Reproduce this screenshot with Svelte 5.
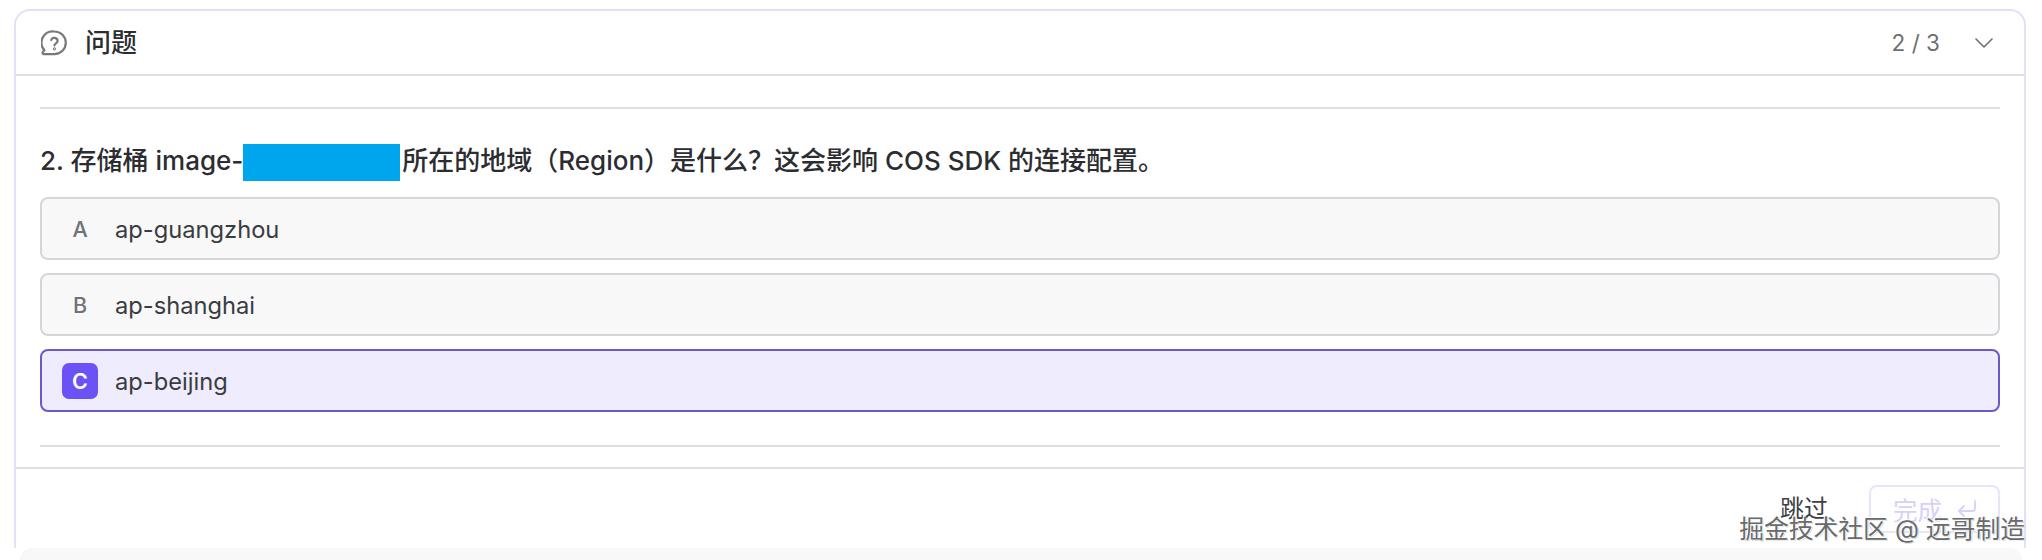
<script>
  const options = [
    { key: 'A', label: 'ap-guangzhou' },
    { key: 'B', label: 'ap-shanghai' },
    { key: 'C', label: 'ap-beijing', selected: true }
  ];
</script>

<div class="page">
  <section class="card">
    <header class="head">
      <svg class="q-icon" viewBox="0 0 26 26" fill="none" stroke="#77797d" stroke-width="2.2" stroke-linecap="round" stroke-linejoin="round">
        <path d="M13.5 1.5a11.3 11.3 0 0 1 0 22.6H3a1.4 1.4 0 0 1-1-2.4l1.4-1.5A11.3 11.3 0 0 1 13.5 1.5z" />
        <path d="M10.2 10a3.3 3.3 0 0 1 6.4 1c0 2.2-3.2 2.6-3.2 4.4" />
        <circle cx="13.4" cy="18.8" r="0.5" />
      </svg>
      <h2 class="title">问题</h2>
      <span class="count">2 / 3</span>
      <svg class="chev" viewBox="0 0 18 10" fill="none" stroke="#6b6e73" stroke-width="1.6" stroke-linecap="round" stroke-linejoin="round">
        <path d="M1 1l8 8 8-8" />
      </svg>
    </header>

    <div class="body">
      <hr class="rule" />
      <p class="question">2. 存储桶 image-<span class="mask"></span>所在的地域（Region）是什么？这会影响 COS SDK 的连接配置。</p>
      <div class="options">
        {#each options as o}
          <div class="option" class:selected={o.selected}>
            <span class="key">{o.key}</span>
            <span class="label">{o.label}</span>
          </div>
        {/each}
      </div>
      <hr class="rule second" />
    </div>

    <footer class="foot">
      <span class="skip">跳过</span>
      <div class="done">
        <span>完成</span>
        <svg class="ret" viewBox="0 0 20 18" fill="none" stroke="#d6d0fb" stroke-width="1.8" stroke-linecap="round" stroke-linejoin="round">
          <path d="M18 1v7a3 3 0 0 1-3 3H2" /><path d="M7 6l-5 5 5 5" />
        </svg>
      </div>
    </footer>
    <div class="watermark">掘金技术社区 @ 远哥制造</div>
  </section>
  <div class="strip"></div>
</div>

<style>
  :global(body) {
    margin: 0;
    background: #fff;
  }
  .page {
    width: 2042px;
    height: 560px;
    display: flex;
    flex-direction: column;
    overflow: hidden;
    font-family: Inter, "Noto Sans CJK SC", sans-serif;
    color: #2b2d31;
  }
  .card {
    position: relative;
    box-sizing: border-box;
    margin: 9px 16px 0 14px;
    height: 539px;
    border: 2px solid #e2e0f6;
    border-bottom: 0;
    border-radius: 16px 16px 0 0;
    background: #fff;
    display: flex;
    flex-direction: column;
  }
  .head {
    box-sizing: border-box;
    height: 65px;
    flex: none;
    display: flex;
    align-items: center;
    padding: 2px 31px 2px 25px;
    border-bottom: 2px solid #dcdfe3;
  }
  .q-icon {
    width: 26px;
    height: 26px;
    flex: none;
  }
  .title {
    margin: 0 0 0 18px;
    font-size: 26px;
    font-weight: 500;
    line-height: 34px;
    flex: 1;
  }
  .count {
    font-size: 22.5px;
    color: #6c6f74;
    margin-right: 35px;
  }
  .chev {
    width: 18px;
    height: 10px;
    flex: none;
  }
  .body {
    flex: none;
    padding: 31px 24px 0 24px;
  }
  .rule {
    margin: 0;
    border: 0;
    border-top: 2px solid #dcdfe2;
  }
  .question {
    margin: 35px 0 16px;
    font-size: 26px;
    font-weight: 500;
    line-height: 34px;
    display: flex;
    align-items: flex-start;
    white-space: pre;
  }
  .mask {
    display: inline-block;
    width: 157px;
    height: 37px;
    background: #00a6ed;
    margin-right: 2px;
  }
  .options {
    display: flex;
    flex-direction: column;
    gap: 13px;
  }
  .option {
    box-sizing: border-box;
    height: 63px;
    display: flex;
    align-items: center;
    padding: 0 20px;
    border: 2px solid #d3d6da;
    border-radius: 8px;
    background: #f8f8f9;
    font-size: 23.7px;
  }
  .option.selected {
    border-color: #6b59cc;
    background: #efecfd;
  }
  .key {
    width: 36px;
    height: 36px;
    flex: none;
    display: flex;
    align-items: center;
    justify-content: center;
    border-radius: 7px;
    font-size: 21.5px;
    font-weight: 500;
    color: #6f7277;
  }
  .selected .key {
    background: #6b52f6;
    color: #fff;
    font-weight: 600;
  }
  .label {
    margin-left: 17px;
    padding-top: 1px;
    color: #3a3c41;
  }
  .rule.second {
    margin-top: 33px;
  }
  .foot {
    box-sizing: border-box;
    margin-top: 20px;
    border-top: 2px solid #dcdfe3;
    flex: 1;
    display: flex;
    align-items: flex-start;
    justify-content: flex-end;
    padding: 16px 24px 0 0;
  }
  .skip {
    font-size: 24px;
    line-height: 48px;
    color: #3d3f44;
    margin-right: 41px;
  }
  .done {
    box-sizing: border-box;
    width: 131px;
    height: 48px;
    border: 2px solid #e8e5fb;
    border-radius: 8px;
    display: flex;
    align-items: center;
    padding-left: 22px;
    gap: 15px;
    font-size: 24.5px;
    color: #d6d0fb;
  }
  .ret {
    width: 20px;
    height: 18px;
  }
  .watermark {
    position: absolute;
    right: -1px;
    bottom: 4px;
    font-size: 24.8px;
    line-height: 30px;
    white-space: nowrap;
    color: #6a6a6a;
    text-shadow: 1px 1px 1px #fff, -1px -1px 0 #fff, 1px 1px 0 #999;
  }
  .strip {
    flex: 1;
    margin: 0 20px 0 20px;
    background: #f8f8f8;
    border-radius: 14px 14px 0 0;
  }
</style>
